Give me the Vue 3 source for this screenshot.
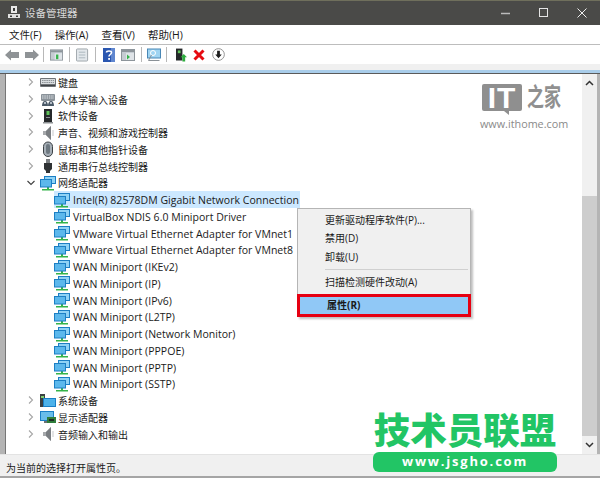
<template>
  <div class="window">
    <svg class="defs" width="0" height="0">
      <symbol id="i-keyboard" viewBox="0 0 16 16">
        <rect x="0" y="4" width="16" height="9" rx="1" fill="#6f7377" />
        <rect x="1" y="5" width="14" height="5" fill="#d9dde0" />
        <path d="M2 6.500h12M2 8.500h12" stroke="#8d9296" stroke-dasharray="1.500 .7" />
        <rect x="1" y="11" width="14" height="1" fill="#3f4346" />
      </symbol>
      <symbol id="i-hid" viewBox="0 0 16 16">
        <rect x="1" y="3" width="14" height="7" rx="1" fill="#8a9299" />
        <path d="M2 5h12M2 7h12" stroke="#dfe4e8" stroke-dasharray="1.500 .8" />
        <path d="M2 15c0-3 1-5 3-5s3 2 3 5zM8 15c0-3 1-5 3-5s3 2 3 5z" fill="#4b5a68" />
        <circle cx="5" cy="12" r="1" fill="#d5dde4" />
        <circle cx="11" cy="12" r="1" fill="#d5dde4" />
      </symbol>
      <symbol id="i-chip" viewBox="0 0 16 16">
        <rect x="4" y="1" width="8" height="13" fill="#26292b" />
        <rect x="6.500" y="3" width="3" height="4" fill="#5fc25a" />
        <rect x="6" y="9" width="4" height="1" fill="#8a8f93" />
        <rect x="3" y="14" width="10" height="1.500" fill="#8d9194" />
      </symbol>
      <symbol id="i-speaker" viewBox="0 0 16 16">
        <path d="M3 6h3l5-5v14l-5-5H3z" fill="#a6a9ac" />
        <path d="M6 6l5-5v14l-5-5z" fill="#7a7e82" />
        <path d="M13 5v6" stroke="#c7c9cb" />
      </symbol>
      <symbol id="i-mouse" viewBox="0 0 16 16">
        <rect x="3.500" y="1" width="9" height="14.500" rx="4.500" fill="#a7b0b8" stroke="#3d4246" />
        <rect x="6" y="3" width="4" height="10" rx="2" fill="#6d7880" />
      </symbol>
      <symbol id="i-usb" viewBox="0 0 16 16">
        <rect x="6" y="1" width="4" height="4" fill="#7b7f82" />
        <path d="M4 5h8v6l-2 2v2H6v-2l-2-2z" fill="#2f3234" />
      </symbol>
      <symbol id="i-net" viewBox="0 0 16 16">
        <path d="M7 12h2v2h5v1.500H2V14h5z" fill="#35b34a" />
        <rect x="4" y="1" width="12" height="8" fill="#1c7fc4" />
        <rect x="5" y="2" width="10" height="6" fill="#8fd2f5" />
        <rect x="0" y="4" width="12" height="8.500" fill="#1c7fc4" />
        <rect x="1" y="5" width="10" height="6.500" fill="#5cb8ec" />
      </symbol>
      <symbol id="i-system" viewBox="0 0 16 16">
        <rect x="0" y="1" width="5" height="13" fill="#3b3f42" />
        <rect x="1" y="3" width="3" height="2" fill="#7fcf6e" />
        <rect x="3" y="5" width="13" height="9" fill="#1a7fc6" />
        <rect x="4" y="6" width="11" height="7" fill="#4db2ea" />
      </symbol>
      <symbol id="i-display" viewBox="0 0 16 16">
        <rect x="0" y="2" width="14" height="10" fill="#1a7fc6" />
        <rect x="1" y="3" width="12" height="8" fill="#69bdea" />
        <rect x="4" y="12" width="6" height="2" fill="#6b7074" />
        <rect x="7" y="8" width="9" height="6" fill="#2f7d3b" />
        <rect x="9" y="10" width="5" height="2" fill="#1e2b22" />
      </symbol>
      <symbol id="i-console" viewBox="0 0 14 14">
        <rect x=".5" y="1.500" width="13" height="11" fill="#c5ccd2" stroke="#8d959b" />
        <rect x="1" y="2" width="12" height="2" fill="#8d959b" />
        <rect x="5" y="5" width="8" height="7" fill="#dfe4e8" />
      </symbol>
    </svg>

    <header class="titlebar">
      <svg class="title-icon" viewBox="0 0 12 13" width="12" height="13">
        <rect x="3" y="0" width="6" height="7" fill="#e8e8e8" />
        <rect x="5" y="2" width="2" height="3" fill="#3a3a3a" />
        <rect x="0" y="8" width="12" height="4" fill="#e0e0e0" />
        <rect x="2" y="9.500" width="2" height="1.500" fill="#3a3a3a" />
        <rect x="8" y="9.500" width="2" height="1.500" fill="#3a3a3a" />
      </svg>
      <span class="title-text">设备管理器</span>
      <div class="controls">
        <svg viewBox="0 0 10 10" width="10" height="10"><path d="M0 5.500h9" stroke="#bbb" stroke-width="1.500" /></svg>
        <svg viewBox="0 0 10 10" width="10" height="10"><rect x=".5" y=".5" width="8" height="8" fill="none" stroke="#e4e4e4" /></svg>
        <svg viewBox="0 0 10 10" width="10" height="10"><path d="M.5.500l9 9M9.500.500l-9 9" stroke="#eee" /></svg>
      </div>
    </header>

    <nav class="menubar">
      <span v-for="m in menus" :key="m">{{ m }}</span>
    </nav>

    <div class="toolbar">
      <svg class="tool" viewBox="0 0 14 12" width="14" height="12"><path d="M0 6l6-5.500V3h8v6H6v2.500z" fill="#8f9396" /></svg>
      <svg class="tool tight" viewBox="0 0 14 12" width="14" height="12"><path d="M14 6L8 .5V3H0v6h8v2.500z" fill="#8f9396" /></svg>
      <i class="sep" />
      <svg class="tool" viewBox="0 0 14 14" width="13" height="14">
        <use href="#i-console" />
        <rect x="6.500" y="6.500" width="2.500" height="5" fill="#35b34a" />
      </svg>
      <i class="sep" />
      <svg class="tool" viewBox="0 0 14 14" width="13" height="14">
        <rect x=".5" y=".5" width="12" height="13" rx="1" fill="#e3e8ec" stroke="#9aa2a8" />
        <path d="M3 4h7M3 7h7M3 10h7" stroke="#a9b4bc" />
      </svg>
      <i class="sep sep-help" />
      <svg class="tool" viewBox="0 0 12 14" width="12" height="14">
        <rect width="12" height="14" fill="#2a56b0" />
        <rect x="8" width="4" height="14" fill="#5f86cf" />
        <path d="M3.500 4.500C3.500 2.500 8.500 2.500 8.500 4.500 8.500 6.500 6 6.500 6 8.500" fill="none" stroke="#fff" stroke-width="1.600" />
        <rect x="5.200" y="10" width="1.800" height="1.800" fill="#fff" />
      </svg>
      <svg class="tool" viewBox="0 0 14 14" width="14" height="14">
        <use href="#i-console" />
        <path d="M6 6.500l3 2.500-3 2.500z" fill="#35b34a" />
      </svg>
      <i class="sep sep-mon" />
      <svg class="tool tight" viewBox="0 0 14 14" width="14" height="14">
        <rect x=".5" y="1" width="13" height="9" fill="#9fd4f2" stroke="#4a87b5" />
        <circle cx="6" cy="5" r="2.500" fill="none" stroke="#fff" />
        <path d="M4.500 7L1.500 12.500h11" fill="none" stroke="#8a9197" />
      </svg>
      <i class="sep sep-wide" />
      <svg class="tool" viewBox="0 0 12 14" width="11" height="14">
        <rect x="0" y="0" width="7" height="13" fill="#25282a" />
        <rect x="2" y="2" width="3" height="3" fill="#61c45b" />
        <path d="M8.500 6l3.500 3.500H10V14H7V9.500H5z" fill="#2eae3f" />
      </svg>
      <svg class="tool wide" viewBox="0 0 12 12" width="12" height="12">
        <path d="M1.500 1.500l9 9M10.500 1.500l-9 9" stroke="#e60b12" stroke-width="3" />
      </svg>
      <svg class="tool" viewBox="0 0 14 14" width="13" height="13">
        <circle cx="7" cy="7" r="6.300" fill="#fff" stroke="#8b8b8b" />
        <path d="M5.500 3h3v4h2L7 11 3.500 7h2z" fill="#1c1c1c" />
      </svg>
    </div>

    <div class="strip" />

    <main class="body">
      <div class="tree">
        <div
          v-for="row in rows"
          :key="row.label"
          class="row"
          :class="{ child: row.child }"
        >
          <svg v-if="row.arrow === 'closed'" class="chev" viewBox="0 0 8 8" width="8" height="8">
            <path d="M2 .500L5.500 4 2 7.500" fill="none" stroke="#a6a6a6" stroke-width="1.100" />
          </svg>
          <svg v-else-if="row.arrow === 'open'" class="chev" viewBox="0 0 8 8" width="8" height="8">
            <path d="M.500 2L4 5.500 7.500 2" fill="none" stroke="#404040" stroke-width="1.100" />
          </svg>
          <div class="cell" :class="{ selected: row.selected }">
            <svg class="row-icon" viewBox="0 0 16 16" width="16" height="16">
              <use :href="'#i-' + row.icon" />
            </svg>
            <span class="label">{{ row.label }}</span>
          </div>
        </div>
      </div>
      <div class="scrollbar">
        <svg class="arrow" viewBox="0 0 9 6" width="9" height="6"><path d="M1 5l3.500-3.500L8 5" fill="none" stroke="#333" stroke-width="1.500" /></svg>
        <div class="track"><div class="thumb" /></div>
        <svg class="arrow" viewBox="0 0 9 6" width="9" height="6"><path d="M1 1l3.500 3.500L8 1" fill="none" stroke="#333" stroke-width="1.500" /></svg>
      </div>

      <div class="context">
        <div class="item">更新驱动程序软件(P)...</div>
        <div class="item">禁用(D)</div>
        <div class="item">卸载(U)</div>
        <div class="divider" />
        <div class="item">扫描检测硬件改动(A)</div>
        <div class="item active">属性(R)</div>
      </div>

      <div class="ithome">
        <div class="it-row">
          <div class="it-box">IT</div>
          <span class="it-name">之家</span>
        </div>
        <div class="it-url">www.ithome.com</div>
      </div>
    </main>

    <footer class="status">为当前的选择打开属性页。</footer>

    <div class="jsgho">
      <div class="js-name">技术员联盟</div>
      <div class="js-url">www.jsgho.com</div>
    </div>
  </div>
</template>

<script setup>
const menus = ["文件(F)", "操作(A)", "查看(V)", "帮助(H)"]

const top = [
  ["键盘", "keyboard"],
  ["人体学输入设备", "hid"],
  ["软件设备", "chip"],
  ["声音、视频和游戏控制器", "speaker"],
  ["鼠标和其他指针设备", "mouse"],
  ["通用串行总线控制器", "usb"]
]

const adapters = [
  "Intel(R) 82578DM Gigabit Network Connection",
  "VirtualBox NDIS 6.0 Miniport Driver",
  "VMware Virtual Ethernet Adapter for VMnet1",
  "VMware Virtual Ethernet Adapter for VMnet8",
  "WAN Miniport (IKEv2)",
  "WAN Miniport (IP)",
  "WAN Miniport (IPv6)",
  "WAN Miniport (L2TP)",
  "WAN Miniport (Network Monitor)",
  "WAN Miniport (PPPOE)",
  "WAN Miniport (PPTP)",
  "WAN Miniport (SSTP)"
]

const bottom = [
  ["系统设备", "system"],
  ["显示适配器", "display"],
  ["音频输入和输出", "speaker"]
]

const toRow = ([label, icon]) => ({ label, icon, arrow: "closed" })

const rows = [
  ...top.map(toRow),
  { label: "网络适配器", icon: "net", arrow: "open" },
  ...adapters.map((label, i) => ({ label, icon: "net", child: true, selected: i === 0 })),
  ...bottom.map(toRow)
]
</script>

<style scoped>
.window {
  position: relative;
  display: flex;
  flex-direction: column;
  width: 600px;
  height: 478px;
  overflow: hidden;
  background: #b4b4b4;
  color: #1a1a1a;
  font-family: "Open Sans", "Noto Sans CJK SC", sans-serif;
  font-size: 10px;
}

.defs {
  position: absolute;
}

.titlebar {
  display: flex;
  flex: 0 0 25px;
  align-items: center;
  box-sizing: border-box;
  padding-left: 8px;
  padding-bottom: 1px;
  border-top: 1px solid #6f6f5c;
  background: #4a4a48;
  color: #d8d8d8;
}

.title-icon {
  margin-right: 5px;
}

.title-text {
  font-size: 10.500px;
}

.controls {
  display: flex;
  gap: 28px;
  margin-left: auto;
  padding-right: 13px;
}

.menubar {
  display: flex;
  flex: 0 0 20px;
  gap: 13px;
  align-items: center;
  box-sizing: border-box;
  padding-left: 9px;
  border-bottom: 1px solid #bdbdbd;
  background: #fff;
  font-size: 10.500px;
}

.toolbar {
  display: flex;
  flex: 0 0 19px;
  align-items: center;
  padding-left: 5px;
  background: #fff;
}

.tool {
  margin-right: 6px;
}

.tool.tight {
  margin-right: 5px;
}

.tool.wide {
  margin-right: 7px;
}

.tool:nth-of-type(2) {
  margin-right: 4px;
}

.sep {
  width: 1px;
  height: 15px;
  margin-right: 6px;
  background: #b8b8b8;
}

.sep-help {
  margin-right: 7px;
}

.sep-mon {
  margin-right: 5px;
}

.sep-wide {
  margin-right: 9px;
}

.strip {
  flex: 0 0 10px;
  box-sizing: border-box;
  border-bottom: 1px solid #5a5a5a;
  background: linear-gradient(#f0f0f0 0 6px, #a9cdea 6px);
}

.body {
  position: relative;
  display: flex;
  flex: 1;
  min-height: 0;
  margin: 0 3px 0 5px;
  border-left: 1px solid #777;
  background: #fff;
}

.tree {
  flex: 1;
}

.row {
  position: relative;
  display: flex;
  height: 16.760px;
  padding-left: 34px;
}

.row.child {
  padding-left: 48px;
}

.chev {
  position: absolute;
  top: 4px;
  left: 21px;
}

.cell {
  display: flex;
  gap: 2px;
  align-items: center;
  padding-right: 1px;
}

.child .cell {
  gap: 3px;
}

.selected {
  background: #cce8ff;
}

.row-icon {
  flex: none;
}

.child .label {
  position: relative;
  top: .5px;
  font-size: 10.500px;
  letter-spacing: .03px;
}

.scrollbar {
  display: flex;
  flex: 0 0 15px;
  flex-direction: column;
  align-items: center;
  background: #f0f0f0;
}

.arrow {
  flex: none;
  margin: 6px 0;
}

.track {
  display: flex;
  flex: 1;
  flex-direction: column;
  justify-content: flex-end;
  width: 100%;
  padding-top: 104px;
  box-sizing: border-box;
}

.thumb {
  flex: 1;
  background: #cdcdcd;
}

.context {
  position: absolute;
  top: 134px;
  left: 291px;
  width: 174px;
  box-sizing: border-box;
  padding-top: 2px;
  border: 1px solid #b5b5b5;
  background: #f0f0f0;
  box-shadow: 2px 2px 2px rgba(0, 0, 0, .25);
}

.item {
  height: 18.300px;
  padding-left: 27px;
  line-height: 18.300px;
}

.divider {
  height: 1px;
  margin: 3px 2px 3px 27px;
  background: #d0d0d0;
}

.item.active {
  box-sizing: border-box;
  height: 23px;
  margin: 3px -1px -1px -1px;
  border: 3px solid #e60012;
  background: #90c8f6;
  font-weight: 700;
  line-height: 17px;
}

.ithome {
  position: absolute;
  top: 8px;
  left: 476px;
  color: #8a8a8a;
}

.it-row {
  display: flex;
  gap: 5px;
  align-items: center;
}

.it-box {
  position: relative;
  width: 40px;
  height: 27px;
  border-radius: 2px;
  background: #8f8f8f;
  color: #fff;
  font-family: "Liberation Sans", sans-serif;
  font-size: 30px;
  font-weight: 700;
  line-height: 28px;
  letter-spacing: 1px;
  text-align: center;
}

.it-box::after {
  content: "";
  position: absolute;
  top: 27px;
  left: 22px;
  border-top: 4px solid #8f8f8f;
  border-left: 5px solid transparent;
}

.it-name {
  color: #909090;
  font-size: 17px;
  font-weight: 700;
  line-height: 30px;
  transform: scaleY(1.500);
}

.it-url {
  margin: 4px 0 0 -2px;
  font-size: 10.800px;
}

.status {
  flex: 0 0 24px;
  box-sizing: border-box;
  padding: 7px 0 0 6px;
  border-top: 1px solid #e3e3e3;
  border-bottom: 2px solid #a5a5a5;
  background: #f0f0f0;
  line-height: 13px;
}

.jsgho {
  position: absolute;
  top: 408px;
  left: 373px;
  width: 184px;
  color: #22c565;
  text-align: center;
}

.js-name {
  font-family: "Noto Sans CJK SC", sans-serif;
  font-size: 36.500px;
  font-weight: 900;
  line-height: 42px;
  white-space: nowrap;
}

.js-url {
  height: 20px;
  margin-top: 2px;
  border-radius: 6px;
  background: #22c565;
  color: #fff;
  font-family: "Open Sans", sans-serif;
  font-size: 13px;
  font-weight: 700;
  letter-spacing: 1.800px;
  line-height: 19px;
}
</style>
